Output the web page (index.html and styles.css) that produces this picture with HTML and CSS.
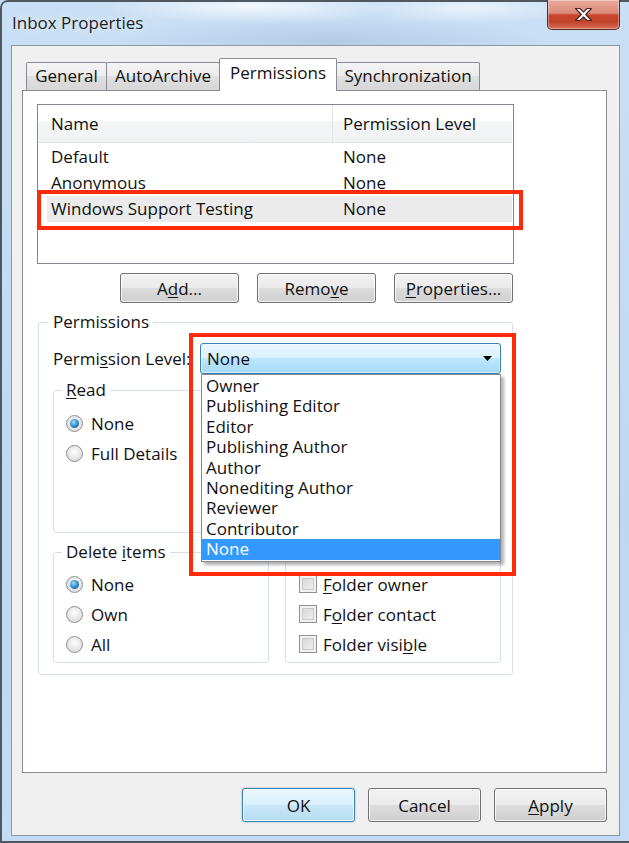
FILE: index.html
```html
<!DOCTYPE html>
<html lang="en">
<head>
    <meta charset="UTF-8">
    <meta name="viewport" content="width=device-width, initial-scale=1.0">
    <title>Inbox Properties</title>
    <link rel="stylesheet" href="styles.css">
</head>
<body>
    <div class="window">
        <div class="titlebar">
            <span class="title">Inbox Properties</span>
            <button class="close" type="button">
                <svg width="19" height="15" viewBox="0 0 19 15">
                    <path d="M1.5 1.5h4.5l3.5 3.6 3.5-3.6h4.5l-5.8 6 5.8 6h-4.5l-3.5-3.6-3.5 3.6h-4.5l5.8-6z" fill="#fff" stroke="#4a2a24" stroke-width="1.2" stroke-linejoin="round"/>
                </svg>
            </button>
        </div>

        <div class="client">
            <div class="tabs">
                <div class="tab tab-general">General</div>
                <div class="tab tab-archive">AutoArchive</div>
                <div class="tab tab-perms active">Permissions</div>
                <div class="tab tab-sync">Synchronization</div>
            </div>

            <div class="panel">
                <div class="panel-body">
                    <div class="listbox">
                        <div class="list-head">
                            <span>Name</span>
                            <span class="col2">Permission Level</span>
                        </div>
                        <div class="list-rows">
                            <div class="row"><span>Default</span><span>None</span></div>
                            <div class="row"><span>Anonymous</span><span>None</span></div>
                            <div class="row selected"><span>Windows Support Testing</span><span>None</span></div>
                        </div>
                    </div>

                    <div class="btn-row">
                        <button class="btn" type="button">A<u>d</u>d...</button>
                        <button class="btn" type="button">Remo<u>v</u>e</button>
                        <button class="btn" type="button"><u>P</u>roperties...</button>
                    </div>

                    <fieldset class="perms">
                        <legend>Permissions</legend>
                        <div class="level-row">
                            <label class="level-label">Permi<u>s</u>sion Level:</label>
                            <div class="combo">
                                <span>None</span>
                                <svg class="arrow" width="9" height="5" viewBox="0 0 9 5"><path d="M0 0h9L4.5 5z" fill="#000"/></svg>
                                <ul class="dropdown">
                                    <li>Owner</li>
                                    <li>Publishing Editor</li>
                                    <li>Editor</li>
                                    <li>Publishing Author</li>
                                    <li>Author</li>
                                    <li>Nonediting Author</li>
                                    <li>Reviewer</li>
                                    <li>Contributor</li>
                                    <li class="current">None</li>
                                </ul>
                            </div>
                        </div>

                        <div class="subgroups">
                            <fieldset class="sub">
                                <legend><u>R</u>ead</legend>
                                <div class="opt"><span class="radio on"></span>None</div>
                                <div class="opt"><span class="radio"></span>Full Details</div>
                            </fieldset>
                            <!-- this group sits under the open list -->
                            <fieldset class="sub sub-right sub-hidden"></fieldset>
                            <fieldset class="sub sub-low">
                                <legend>Delete <u>i</u>tems</legend>
                                <div class="opt"><span class="radio on"></span>None</div>
                                <div class="opt"><span class="radio"></span>Own</div>
                                <div class="opt"><span class="radio"></span>All</div>
                            </fieldset>
                            <fieldset class="sub sub-right sub-other">
                                <div class="opt"><span class="check"></span><span><u>F</u>older owner</span></div>
                                <div class="opt"><span class="check"></span><span>F<u>o</u>lder contact</span></div>
                                <div class="opt"><span class="check"></span><span>Folder visi<u>b</u>le</span></div>
                            </fieldset>
                        </div>
                    </fieldset>
                </div>

                <!-- red callouts drawn on top of the screenshot -->
                <div class="annot annot-list"></div>
                <div class="annot annot-combo"></div>
            </div>

            <div class="footer">
                <button class="btn btn-default" type="button">OK</button>
                <button class="btn" type="button">Cancel</button>
                <button class="btn" type="button"><u>A</u>pply</button>
            </div>
        </div>
    </div>
</body>
</html>
```

FILE: styles.css
```css
* {
    box-sizing: border-box;
}

body {
    margin: 0;
    font-family: "Open Sans", "Noto Sans", sans-serif;
    font-size: 17px;
    color: #111;
    background: #c3dbf3;
}

u {
    text-decoration-thickness: 1px;
    text-underline-offset: 2px;
}

.window {
    width: 629px;
    height: 843px;
    overflow: hidden;
    border-top-left-radius: 8px;
    background:
        radial-gradient(ellipse 150px 18px at 250px 6px, rgba(255, 255, 255, 0.75), transparent),
        radial-gradient(ellipse 110px 16px at 470px 8px, rgba(255, 255, 255, 0.6), transparent),
        radial-gradient(ellipse 220px 26px at 330px 42px, rgba(140, 170, 205, 0.35), transparent),
        linear-gradient(#c9dff5, #bfd8f1 60%, #c3dbf4);
    box-shadow: inset 2px 0 0 #4f5860, inset 0 2px 0 #4f5860, inset 0 -2px 0 #4f5860;
}

.titlebar {
    display: flex;
    justify-content: space-between;
    align-items: flex-start;
    height: 45px;
}

.title {
    padding: 12px 0 0 12px;
    line-height: 22px;
    color: #1e1e1e;
    text-shadow: 0 0 8px rgba(255, 255, 255, 0.9);
}

.close {
    display: flex;
    align-items: center;
    justify-content: center;
    width: 73px;
    height: 30px;
    margin-right: 9px;
    padding: 0;
    border: 1px solid #5a2a22;
    border-top: none;
    border-radius: 0 0 5px 5px;
    background: linear-gradient(#eaaa9c, #dc8b79 45%, #c8462f 52%, #c2432c 75%, #d86e58);
    box-shadow: inset 0 0 0 1px rgba(255, 255, 255, 0.35);
}

.client {
    height: 791px;
    margin: 0 9px 0 11px;
    padding: 12px 12px 0 10px;
    background: #f0f0f0;
    border: 1px solid #8d9aa6;
}

/* tabs */
.tabs {
    display: flex;
    align-items: flex-end;
    height: 32px;
    margin-left: 4px;
    position: relative;
    z-index: 1;
}

.tab {
    height: 28px;
    margin-left: -1px;
    line-height: 26px;
    text-align: center;
    border: 1px solid #898c95;
    border-bottom: none;
    border-radius: 2px 2px 0 0;
    background: linear-gradient(#f4f4f4, #ececec 50%, #e0e0e0 50%, #d6d6d6);
}

.tab-general { width: 81px; margin-left: 0; }
.tab-archive { width: 114px; }
.tab-perms { width: 118px; }
.tab-sync { width: 144px; }

.tab.active {
    position: relative;
    z-index: 2;
    height: 33px;
    margin-bottom: -1px;
    padding-top: 1px;
    background: #fff;
}

.panel {
    position: relative;
    width: 585px;
    height: 683px;
    background: #fff;
    border: 1px solid #898c95;
}

.panel-body {
    width: 477px;
    margin-left: 14px;
    padding-top: 13px;
}

/* list view */
.listbox {
    height: 160px;
    border: 1px solid #828790;
}

.list-head {
    display: grid;
    grid-template-columns: 294px 1fr;
    height: 38px;
    margin-right: 1px;
    background: linear-gradient(#fff, #fff 42%, #f4f5f7 46%, #f1f2f4);
    border-bottom: 1px solid #e2e4e7;
}

.list-head span {
    padding-left: 13px;
    line-height: 37px;
}

.list-head .col2 {
    padding-left: 10px;
    border-left: 1px solid #e2e4e7;
}

.list-rows {
    padding: 1px 1px 0 9px;
}

.row {
    display: grid;
    grid-template-columns: 292px 1fr;
    height: 26px;
    line-height: 26px;
}

.row span {
    padding-left: 4px;
}

.row.selected {
    background: #ebebeb;
}

/* push buttons */
.btn-row {
    display: flex;
    justify-content: flex-end;
    gap: 18px;
    margin-top: 9px;
    padding-right: 1px;
}

.btn {
    width: 119px;
    height: 30px;
    padding: 0;
    font-family: inherit;
    font-size: 17px;
    color: #111;
    border: 1px solid #707070;
    border-radius: 3px;
    background: linear-gradient(#f2f2f2, #ebebeb 50%, #dddddd 50%, #cfcfcf);
    box-shadow: inset 0 0 0 1px rgba(255, 255, 255, 0.75);
}

/* group boxes */
fieldset {
    min-width: 0;
    margin: 0;
    border: 1px solid #d5dfe5;
    border-radius: 3px;
}

legend {
    margin-left: -4px;
    padding: 0 4px;
    line-height: 20px;
}

.perms {
    margin: 9px 1px 0;
    padding: 11px 11px 11px 14px;
}

.level-row {
    display: flex;
    align-items: center;
    height: 31px;
}

.level-label {
    width: 147px;
}

.combo {
    position: relative;
    display: flex;
    align-items: center;
    justify-content: space-between;
    width: 301px;
    height: 31px;
    padding: 0 8px 0 6px;
    border: 1px solid #3c7fb1;
    border-radius: 3px;
    background: linear-gradient(#eaf6fd, #d9f0fc 50%, #bee6fd 50%, #a7d9f5);
    box-shadow: inset 0 0 0 1px rgba(255, 255, 255, 0.45);
}

.arrow {
    margin-bottom: 1px;
}

.dropdown {
    position: absolute;
    top: 30px;
    left: 0;
    right: -1px;
    z-index: 5;
    margin: 0;
    padding: 1px 0;
    list-style: none;
    background: #fff;
    border: 1px solid #828790;
    box-shadow: 3px 3px 3px rgba(0, 0, 0, 0.3);
}

.dropdown li {
    height: 20.4px;
    padding-left: 4px;
    line-height: 20.4px;
}

.dropdown .current {
    background: #3399ff;
    color: #fff;
}

.subgroups {
    display: grid;
    grid-template-columns: 216px 216px;
    grid-template-rows: 153px 121px;
    column-gap: 16px;
    row-gap: 9px;
    margin-top: 6px;
}

.sub {
    padding: 8px 8px 0 12px;
}

.sub-right {
    padding-left: 13px;
}

.sub-hidden {
    margin-top: 10px;
}

.sub-low {
    padding-top: 7px;
}

.sub-other {
    margin-top: 10px;
    padding-top: 16px;
}

.opt {
    display: flex;
    align-items: center;
    gap: 8px;
    height: 30px;
}

.radio {
    position: relative;
    flex: none;
    width: 17px;
    height: 17px;
    border: 1px solid #8e8f8f;
    border-radius: 50%;
    background: radial-gradient(circle at 50% 40%, #fdfdfd, #e4e4e4 60%, #cfcfcf);
}

.radio.on::after {
    content: "";
    position: absolute;
    top: 3px;
    left: 3px;
    width: 9px;
    height: 9px;
    border-radius: 50%;
    background: radial-gradient(circle at 40% 35%, #9fdcfb, #2c86c8 55%, #0e3c6c);
}

.check {
    flex: none;
    width: 18px;
    height: 18px;
    margin-right: -2px;
    border: 1px solid #8f8f8f;
    background: linear-gradient(135deg, #d4d4d4, #f4f4f4);
    box-shadow: inset 0 0 0 2px #f2f2f2, inset 0 0 0 3px #c8c8c8;
}

/* red callouts */
.annot {
    position: absolute;
    z-index: 10;
    border: 4px solid #ff2a0a;
}

.annot-list {
    left: 14px;
    top: 99px;
    width: 486px;
    height: 40px;
}

.annot-combo {
    left: 166px;
    top: 242px;
    width: 327px;
    height: 243px;
}

/* dialog buttons */
.footer {
    display: flex;
    justify-content: flex-end;
    gap: 13px;
    margin-top: 15px;
}

.footer .btn {
    width: 113px;
    height: 34px;
}

.btn-default {
    border-color: #3c7fb1;
    background: linear-gradient(#eaf6fd, #d9f0fc 50%, #c8e7f8 50%, #b8dcf1);
    box-shadow: inset 0 0 0 1px rgba(255, 255, 255, 0.8), 0 0 2px rgba(60, 127, 177, 0.6);
}
```
